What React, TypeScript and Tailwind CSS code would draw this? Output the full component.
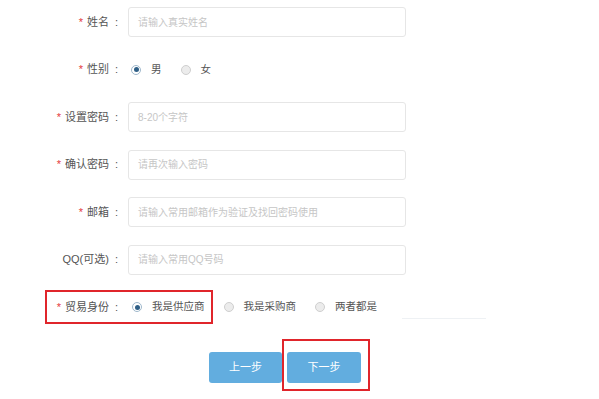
import React from 'react';

const font = { fontFamily: '"Liberation Sans", "Noto Sans CJK SC", sans-serif' };

const Label: React.FC<{ text: string; req?: boolean }> = ({ text, req }) => (
  <div className="flex w-[118px] shrink-0 items-center justify-end text-[11px] text-[#555]">
    {req && <span className="mr-[4px] text-[#e4393c]">*</span>}
    <span>{text}</span>
    <span className="ml-[6px]">:</span>
  </div>
);

const Radio: React.FC<{ on?: boolean; label: string }> = ({ on, label }) => (
  <label className="flex items-center text-[10.5px] text-[#555]">
    <span
      className={`flex h-[10px] w-[10px] items-center justify-center rounded-full border ${
        on ? 'border-[#9fb8cc] bg-white' : 'border-[#cfcfcf] bg-[#ececec]'
      }`}
    >
      {on && <span className="h-[5px] w-[5px] rounded-full bg-[#2f5f86]" />}
    </span>
    <span className="ml-[10px]">{label}</span>
  </label>
);

const Field: React.FC<{ label: string; ph: string; req?: boolean }> = ({ label, ph, req }) => (
  <div className="flex h-[30px] items-center">
    <Label text={label} req={req} />
    <div className="ml-[10px] flex h-[30px] w-[278px] items-center rounded-[3px] border border-[#e6e6e6] bg-white px-[9px] text-[10px] text-[#c6c6c6]">
      {ph}
    </div>
  </div>
);

export default function App() {
  return (
    <div className="relative h-[399px] w-[599px] overflow-hidden bg-white" style={font}>
      <div className="flex flex-col gap-[17.5px] pt-[7px]">
        <Field label="姓名" ph="请输入真实姓名" req />
        <div className="flex h-[30px] items-center">
          <Label text="性别" req />
          <div className="ml-[13px] flex items-center gap-[19px]">
            <Radio on label="男" />
            <Radio label="女" />
          </div>
        </div>
        <Field label="设置密码" ph="8-20个字符" req />
        <Field label="确认密码" ph="请再次输入密码" req />
        <Field label="邮箱" ph="请输入常用邮箱作为验证及找回密码使用" req />
        <Field label="QQ(可选)" ph="请输入常用QQ号码" />
        <div className="relative flex h-[30px] items-center">
          <Label text="贸易身份" req />
          <div className="ml-[14px] flex items-center gap-[19px]">
            <Radio on label="我是供应商" />
            <Radio label="我是采购商" />
            <Radio label="两者都是" />
          </div>
          <div className="absolute left-[45px] top-[-2px] h-[34px] w-[168px] border-2 border-[#e0252b]" />
          <div className="absolute left-[402px] top-[26px] h-[1px] w-[84px] bg-[#eef1f4]" />
        </div>
      </div>
      <div className="relative mt-[30px] flex gap-[5px] pl-[209px]">
        <button className="h-[31px] w-[73px] rounded-[3px] bg-[#62addf] text-[11px] text-white">上一步</button>
        <button className="h-[31px] w-[74px] rounded-[3px] bg-[#62addf] text-[11px] text-white">下一步</button>
        <div className="absolute left-[282px] top-[-13px] h-[52px] w-[88px] border-2 border-[#e0252b]" />
      </div>
    </div>
  );
}
